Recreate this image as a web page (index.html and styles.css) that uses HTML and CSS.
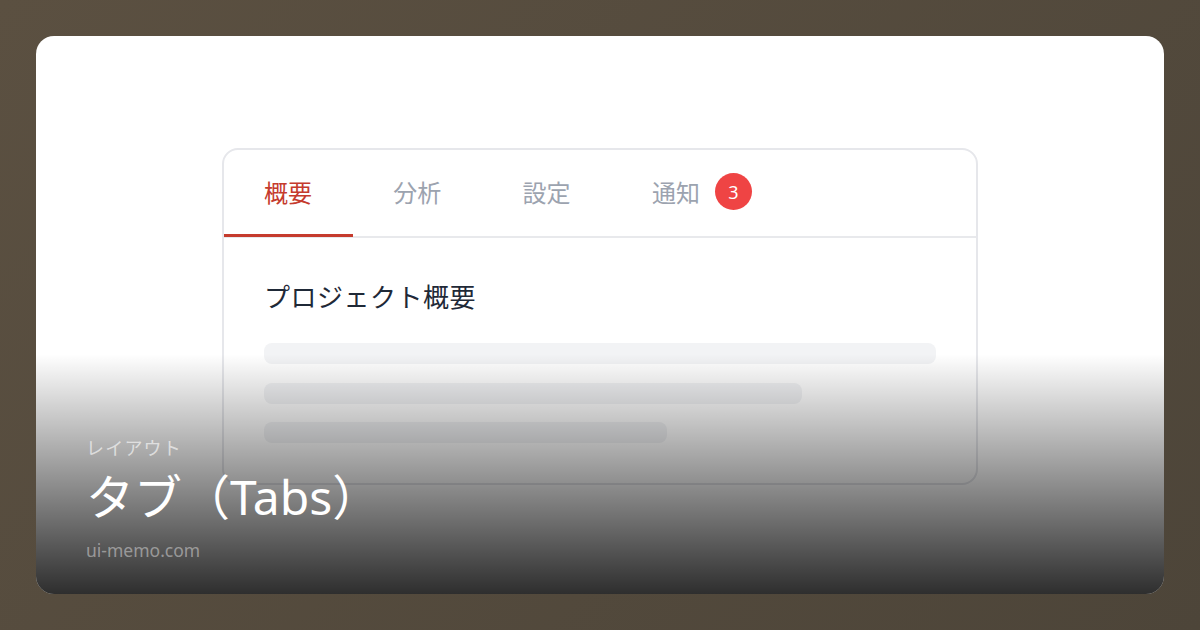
FILE: index.html
```html
<!DOCTYPE html>
<html lang="ja">
<head>
<meta charset="utf-8">
<title>タブ（Tabs）</title>
<link rel="stylesheet" href="styles.css">
</head>
<body>
  <div class="frame">
    <div class="stage">
      <section class="tabs-card">
        <nav class="tab-bar">
          <span class="tab is-active">概要</span>
          <span class="tab">分析</span>
          <span class="tab">設定</span>
          <span class="tab">通知<span class="badge">3</span></span>
        </nav>
        <div class="tab-panel">
          <h2 class="panel-title">プロジェクト概要</h2>
          <div class="skeleton" style="width: 100%"></div>
          <div class="skeleton" style="width: 80%"></div>
          <div class="skeleton" style="width: 60%"></div>
        </div>
      </section>
    </div>
    <div class="shade"></div>
    <div class="caption">
      <div class="caption-kicker">レイアウト</div>
      <div class="caption-title">タブ（Tabs）</div>
      <div class="caption-site">ui-memo.com</div>
    </div>
  </div>
</body>
</html>
```

FILE: styles.css
```css
* {
  box-sizing: border-box;
  margin: 0;
  padding: 0;
}

html, body {
  width: 1200px;
  height: 630px;
}

body {
  background: linear-gradient(135deg, #5b5041 0%, #4d4539 100%);
  font-family: "Noto Sans", "Noto Sans CJK JP", sans-serif;
  padding: 36px;
  overflow: hidden;
}

.frame {
  position: relative;
  width: 1128px;
  height: 558px;
  background: #ffffff;
  border-radius: 18px;
  overflow: hidden;
}

.stage {
  display: flex;
  justify-content: center;
  padding-top: 112px;
}

.tabs-card {
  width: 756px;
  border: 2px solid #e6e7eb;
  border-radius: 16px;
  background: #ffffff;
}

.tab-bar {
  display: flex;
  border-bottom: 2px solid #e8e9ec;
}

.tab {
  display: flex;
  align-items: center;
  gap: 15px;
  padding: 23px 41.3px 24px 40px;
  font-family: "Noto Sans CJK JP", sans-serif;
  font-size: 24px;
  line-height: 32px;
  color: #9ca3af;
  border-bottom: 3px solid transparent;
  margin-bottom: -1px;
}

.tab.is-active {
  color: #c53b2d;
  border-bottom-color: #c53b2d;
}

.badge {
  display: inline-flex;
  align-items: center;
  justify-content: center;
  width: 37px;
  height: 37px;
  border-radius: 50%;
  background: #ef4444;
  color: #ffffff;
  font-family: "Noto Sans", sans-serif;
  font-size: 18px;
  line-height: 1;
}

.tab-panel {
  padding: 42px 40px 40px;
}

.panel-title {
  font-family: "Noto Sans CJK JP", sans-serif;
  font-size: 26px;
  line-height: 32px;
  font-weight: 400;
  letter-spacing: 0.5px;
  color: #1f2937;
  margin-bottom: 31px;
}

.skeleton {
  height: 21px;
  border-radius: 8px;
  background: #f2f3f5;
}

.skeleton + .skeleton {
  margin-top: 18.5px;
}

.shade {
  position: absolute;
  inset: 0;
  background: linear-gradient(to bottom, rgba(0, 0, 0, 0) 57%, rgba(0, 0, 0, 0.82) 100%);
}

.caption {
  position: absolute;
  left: 50px;
  bottom: 33px;
  display: flex;
  flex-direction: column;
}

.caption-kicker {
  font-family: "Noto Sans CJK JP", sans-serif;
  font-size: 18px;
  line-height: 26px;
  color: rgba(255, 255, 255, 0.62);
  letter-spacing: 1.2px;
}

.caption-title {
  font-family: "Noto Sans", "Noto Sans CJK JP", sans-serif;
  font-size: 48px;
  line-height: 64px;
  color: #ffffff;
  margin-top: 5px;
}

.caption-site {
  font-size: 17.5px;
  line-height: 22px;
  color: rgba(255, 255, 255, 0.42);
  margin-top: 10px;
}
```
